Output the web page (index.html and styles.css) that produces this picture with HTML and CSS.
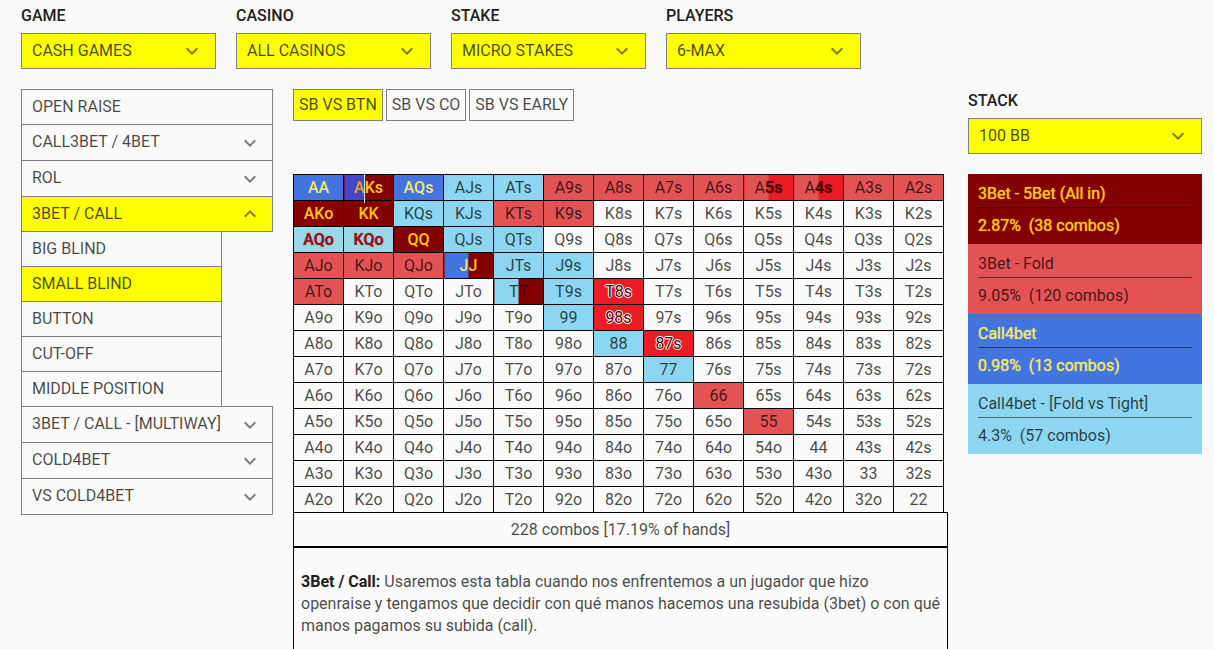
FILE: index.html
```html
<!DOCTYPE html>
<html lang="es">
<head>
<meta charset="utf-8">
<title>3Bet / Call - Small Blind</title>
<link rel="stylesheet" href="styles.css">
</head>
<body>
<svg class="sprite" aria-hidden="true">
  <symbol id="more" viewBox="0 0 24 24"><path d="M16.59 8.59L12 13.17 7.41 8.59 6 10l6 6 6-6z"/></symbol>
  <symbol id="less" viewBox="0 0 24 24"><path d="M12 8l-6 6 1.41 1.41L12 10.83l4.59 4.58L18 14z"/></symbol>
</svg>

<header class="filters">
  <div class="field">
    <label for="game">GAME</label>
    <div class="picker"><select id="game"><option>CASH GAMES</option></select><svg class="icon"><use href="#more"/></svg></div>
  </div>
  <div class="field">
    <label for="casino">CASINO</label>
    <div class="picker"><select id="casino"><option>ALL CASINOS</option></select><svg class="icon"><use href="#more"/></svg></div>
  </div>
  <div class="field">
    <label for="stake">STAKE</label>
    <div class="picker"><select id="stake"><option>MICRO STAKES</option></select><svg class="icon"><use href="#more"/></svg></div>
  </div>
  <div class="field">
    <label for="players">PLAYERS</label>
    <div class="picker"><select id="players"><option>6-MAX</option></select><svg class="icon"><use href="#more"/></svg></div>
  </div>
</header>

<div class="layout">
  <nav class="menu">
    <button class="item">OPEN RAISE</button>
    <button class="item toggle">CALL3BET / 4BET<svg class="icon"><use href="#more"/></svg></button>
    <button class="item toggle">ROL<svg class="icon"><use href="#more"/></svg></button>
    <button class="item active">3BET / CALL<svg class="icon"><use href="#less"/></svg></button>
    <div class="submenu">
      <button class="item">BIG BLIND</button>
      <button class="item active">SMALL BLIND</button>
      <button class="item">BUTTON</button>
      <button class="item">CUT-OFF</button>
      <button class="item">MIDDLE POSITION</button>
    </div>
    <button class="item toggle">3BET / CALL - [MULTIWAY]<svg class="icon"><use href="#more"/></svg></button>
    <button class="item toggle">COLD4BET<svg class="icon"><use href="#more"/></svg></button>
    <button class="item toggle">VS COLD4BET<svg class="icon"><use href="#more"/></svg></button>
  </nav>

  <main class="content">
    <div class="tabs">
      <button class="tab active">SB VS BTN</button>
      <button class="tab">SB VS CO</button>
      <button class="tab">SB VS EARLY</button>
    </div>

    <table class="range">
      <tbody>
        <tr><td class="call">AA</td><td class="call-allin marked"><span>A</span>Ks</td><td class="call">AQs</td><td class="tight">AJs</td><td class="tight">ATs</td><td class="fold">A9s</td><td class="fold">A8s</td><td class="fold">A7s</td><td class="fold">A6s</td><td class="fold-bluff">A<b>5s</b></td><td class="fold-bluff">A<b>4s</b></td><td class="fold">A3s</td><td class="fold">A2s</td></tr>
        <tr><td class="allin">AKo</td><td class="allin">KK</td><td class="tight">KQs</td><td class="tight">KJs</td><td class="fold">KTs</td><td class="fold">K9s</td><td>K8s</td><td>K7s</td><td>K6s</td><td>K5s</td><td>K4s</td><td>K3s</td><td>K2s</td></tr>
        <tr><td class="mixed">AQo</td><td class="mixed">KQo</td><td class="allin">QQ</td><td class="tight">QJs</td><td class="tight">QTs</td><td>Q9s</td><td>Q8s</td><td>Q7s</td><td>Q6s</td><td>Q5s</td><td>Q4s</td><td>Q3s</td><td>Q2s</td></tr>
        <tr><td class="fold">AJo</td><td class="fold">KJo</td><td class="fold">QJo</td><td class="call-allin"><span>J</span>J</td><td class="tight">JTs</td><td class="tight">J9s</td><td>J8s</td><td>J7s</td><td>J6s</td><td>J5s</td><td>J4s</td><td>J3s</td><td>J2s</td></tr>
        <tr><td class="fold">ATo</td><td>KTo</td><td>QTo</td><td>JTo</td><td class="tight-allin">TT</td><td class="tight">T9s</td><td class="bluff">T8s</td><td>T7s</td><td>T6s</td><td>T5s</td><td>T4s</td><td>T3s</td><td>T2s</td></tr>
        <tr><td>A9o</td><td>K9o</td><td>Q9o</td><td>J9o</td><td>T9o</td><td class="tight">99</td><td class="bluff">98s</td><td>97s</td><td>96s</td><td>95s</td><td>94s</td><td>93s</td><td>92s</td></tr>
        <tr><td>A8o</td><td>K8o</td><td>Q8o</td><td>J8o</td><td>T8o</td><td>98o</td><td class="tight">88</td><td class="bluff">87s</td><td>86s</td><td>85s</td><td>84s</td><td>83s</td><td>82s</td></tr>
        <tr><td>A7o</td><td>K7o</td><td>Q7o</td><td>J7o</td><td>T7o</td><td>97o</td><td>87o</td><td class="tight">77</td><td>76s</td><td>75s</td><td>74s</td><td>73s</td><td>72s</td></tr>
        <tr><td>A6o</td><td>K6o</td><td>Q6o</td><td>J6o</td><td>T6o</td><td>96o</td><td>86o</td><td>76o</td><td class="fold">66</td><td>65s</td><td>64s</td><td>63s</td><td>62s</td></tr>
        <tr><td>A5o</td><td>K5o</td><td>Q5o</td><td>J5o</td><td>T5o</td><td>95o</td><td>85o</td><td>75o</td><td>65o</td><td class="fold">55</td><td>54s</td><td>53s</td><td>52s</td></tr>
        <tr><td>A4o</td><td>K4o</td><td>Q4o</td><td>J4o</td><td>T4o</td><td>94o</td><td>84o</td><td>74o</td><td>64o</td><td>54o</td><td>44</td><td>43s</td><td>42s</td></tr>
        <tr><td>A3o</td><td>K3o</td><td>Q3o</td><td>J3o</td><td>T3o</td><td>93o</td><td>83o</td><td>73o</td><td>63o</td><td>53o</td><td>43o</td><td>33</td><td>32s</td></tr>
        <tr><td>A2o</td><td>K2o</td><td>Q2o</td><td>J2o</td><td>T2o</td><td>92o</td><td>82o</td><td>72o</td><td>62o</td><td>52o</td><td>42o</td><td>32o</td><td>22</td></tr>
      </tbody>
    </table>
    <p class="total">228 combos [17.19% of hands]</p>
    <p class="description"><b>3Bet / Call:</b> Usaremos esta tabla cuando nos enfrentemos a un jugador que hizo openraise y tengamos que decidir con qué manos hacemos una resubida (3bet) o con qué manos pagamos su subida (call).</p>
  </main>

  <aside class="side">
    <div class="field">
      <label for="stack">STACK</label>
      <div class="picker"><select id="stack"><option>100 BB</option></select><svg class="icon"><use href="#more"/></svg></div>
    </div>
    <dl class="legend">
      <div class="entry allin"><dt>3Bet - 5Bet (All in)</dt><dd>2.87%&nbsp; (38 combos)</dd></div>
      <div class="entry fold"><dt>3Bet - Fold</dt><dd>9.05%&nbsp; (120 combos)</dd></div>
      <div class="entry call"><dt>Call4bet</dt><dd>0.98%&nbsp; (13 combos)</dd></div>
      <div class="entry tight"><dt>Call4bet - [Fold vs Tight]</dt><dd>4.3%&nbsp; (57 combos)</dd></div>
    </dl>
  </aside>
</div>
</body>
</html>
```
FILE: styles.css
```css
:root {
  --page: #fafafa;
  --line: #808080;
  --active: #ffff00;
  --text: rgba(0, 0, 0, 0.72);
  --allin: #840000;
  --fold: #e35354;
  --call: #4374e0;
  --tight: #8cd6f1;
  --bluff: #ed1c24;
  --gold: #ffc90e;
  --lemon: #f0e868;
}

* { box-sizing: border-box; }

body {
  margin: 0;
  padding: 5px 12px 0 21px;
  background: var(--page);
  color: var(--text);
  font: 400 16px/22px Roboto, "Liberation Sans", sans-serif;
}

button, select {
  font: inherit;
  color: inherit;
  margin: 0;
  border-radius: 0;
  cursor: pointer;
}

.sprite { display: none; }

.icon {
  width: 24px;
  height: 24px;
  flex: none;
  fill: #000;
  opacity: 0.5;
}

/* Filters */
.filters { display: flex; gap: 20px; }
.filters .field { flex: 0 1 195px; }

.field { display: flex; flex-direction: column; gap: 6px; }
.field label { color: #212121; font-weight: 500; }

.picker { display: grid; align-items: center; }
.picker > * { grid-area: 1 / 1; }
.picker .icon { justify-self: end; margin-right: 12px; pointer-events: none; }
.picker select {
  appearance: none;
  width: 100%;
  height: 36px;
  padding: 0 36px 0 10px;
  border: 1px solid var(--line);
  background: var(--active);
}

.layout {
  display: grid;
  grid-template-columns: 252px minmax(0, 1fr) 234px;
  align-items: start;
  gap: 20px;
  margin-top: 20px;
}

/* Menu */
.menu { border-bottom: 1px solid var(--line); }
.item {
  display: flex;
  align-items: center;
  justify-content: space-between;
  width: 100%;
  height: 35px;
  padding: 0 10px;
  border: 1px solid var(--line);
  border-bottom: 0;
  background: none;
  text-align: left;
}
.item.toggle { align-items: flex-start; height: 36px; padding-top: 6px; }
.item.active, .tab.active { background: var(--active); }
.submenu { border-top: 1px solid var(--line); }
.submenu .item { width: 201px; }
.submenu .item:first-child { height: 34px; border-top: 0; }

/* Range chart */
.tabs { display: flex; gap: 3px; margin-bottom: 53px; }
.tab {
  height: 32px;
  padding: 0 5px;
  border: 1px solid var(--line);
  background: none;
}

.range {
  table-layout: fixed;
  border-collapse: collapse;
  width: calc(100% - 4px);
}
.range td {
  height: 26px;
  padding: 0;
  border: 1px solid #000;
  text-align: center;
}

.allin { background: var(--allin); color: var(--gold); }
.fold { background: var(--fold); }
.call { background: var(--call); color: var(--lemon); }
.tight { background: var(--tight); }
td.allin, td.call { font-weight: 500; }
.mixed {
  background: #99d9ea;
  color: #a01018;
  font-weight: 500;
  text-shadow: 0 0 1px #840000;
}
.bluff {
  background: var(--bluff);
  color: #4a0004;
  text-shadow: -1px 0 #fff, 1px 0 #fff, 0 -1px #fff, 0 1px #fff;
}
.call-allin {
  background: linear-gradient(90deg, var(--call) 50%, var(--allin) 50%);
  color: var(--gold);
  font-weight: 500;
}
.call-allin span { color: var(--lemon); }
.tight-allin { background: linear-gradient(90deg, var(--tight) 50%, var(--allin) 50%); }
.fold-bluff { background: linear-gradient(90deg, var(--fold) 50%, var(--bluff) 50%); }
.fold-bluff b { font-weight: 500; color: #4a0004; text-shadow: 0 0 1px #4a0004; }

.marked {
  position: relative;
  background: linear-gradient(90deg, #4444cc 42%, var(--allin) 42%);
}
.marked span { color: #f0a020; }
.marked::after {
  content: "";
  position: absolute;
  top: -4px;
  bottom: -3px;
  left: 20px;
  width: 1px;
  background: #b9dbe6;
}

.total {
  margin: 0;
  padding: 6px 0 5px;
  border: solid #000;
  border-width: 0 1px 2px;
  text-align: center;
}
.range + .total { box-shadow: 0 -1px #000; }

.description {
  margin: 0;
  padding: 23px 6px 23px 7px;
  border: 1px solid #000;
  border-top: 0;
}
.description b { color: #212121; font-weight: 700; }

/* Legend */
.side { padding-top: 1px; }
.legend { margin: 20px 0 0; }
.entry { padding: 9px 10px 7px; }
.entry.allin, .entry.call { text-shadow: 0 0 1px currentColor; }
.entry dt { padding-bottom: 2px; border-bottom: 1px solid rgba(0, 0, 0, 0.5); }
.entry dd { margin: 7px 0 0; }
```
